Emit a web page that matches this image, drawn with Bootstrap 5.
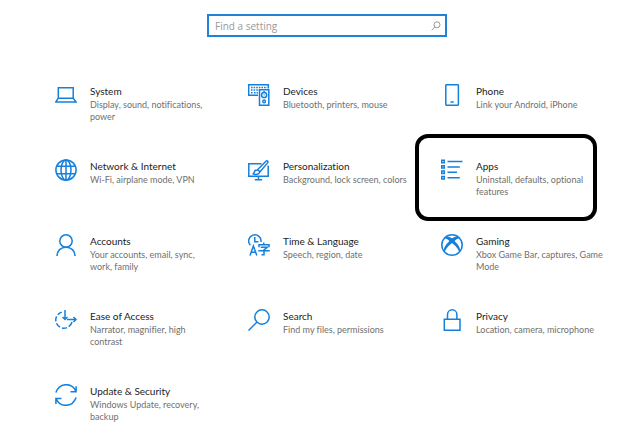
<!DOCTYPE html>
<html lang="en">
<head>
<meta charset="utf-8">
<meta name="viewport" content="width=device-width, initial-scale=1">
<title>Settings</title>
<link href="https://cdn.jsdelivr.net/npm/bootstrap@5.3.0/dist/css/bootstrap.min.css" rel="stylesheet">
<style>
body { background: #fff; font-family: Lato, "Open Sans", sans-serif; font-variant-ligatures: none; }
.settings-page { padding: 14px 20px 0 55px; }
.find-box { max-width: 240px; height: 23px; border: 2px solid #1f83d8; margin-bottom: 46px; }
.find-box input { font-family: "Open Sans", sans-serif; font-size: 10px; line-height: 12px; padding: 0 0 0 6px; color: #333; }
.find-box input::placeholder { color: #999; opacity: 1; }
.find-box input:focus { box-shadow: none; }
.find-box .btn { width: 14px; color: #999; }
.settings-grid { --bs-gutter-x: 35px; --bs-gutter-y: 33px; }
.setting { min-height: 42px; gap: 13px; color: #1c1c1c; }
.setting svg { width: 22px; height: 22px; margin-top: 1px; fill: none; stroke: #1480db; stroke-width: 1.5; }
.setting svg .solid { fill: #1480db; stroke: none; }
.setting h2 { font-size: 10px; line-height: 16px; font-weight: 400; }
.setting p { font-size: 9px; line-height: 12px; color: #707070; }
.highlight { top: -24px; left: -9px; right: 20px; height: 87px; border: 4px solid #000; border-radius: 13px; pointer-events: none; }
</style>
<script src="https://cdn.jsdelivr.net/npm/bootstrap@5.3.0/dist/js/bootstrap.bundle.min.js" defer></script>
</head>
<body>
<main class="settings-page">
  <form class="find-box d-flex mx-auto" role="search">
    <input class="form-control border-0 rounded-0 bg-transparent" type="text" placeholder="Find a setting" aria-label="Find a setting">
    <button class="btn border-0 p-0 d-flex align-items-center flex-shrink-0" type="button" aria-label="Search">
      <svg width="10" height="10" viewBox="0 0 10 10" fill="none" stroke="currentColor"><circle cx="6" cy="3.8" r="3"/><path d="M3.8 6 .7 9.3"/></svg>
    </button>
  </form>
  <div class="row row-cols-3 settings-grid">
    <div class="col"><a href="#" class="setting d-flex align-items-start text-decoration-none">
      <svg class="flex-shrink-0" viewBox="0 0 22 22"><path d="M3.3 3.8h14.9v10.4H3.3zM3.3 14.2.8 18h20.3l-2.900-3.800"/></svg>
      <div><h2 class="m-0">System</h2><p class="m-0">Display, sound, notifications, power</p></div></a></div>
    <div class="col"><a href="#" class="setting d-flex align-items-start text-decoration-none">
      <svg class="flex-shrink-0" viewBox="0 0 22 22"><path d="M10 11.3H.7V.8h19.6v3.7"/><path d="M3 3.500h16M3 6h8M3 8.700h1.500M6 8.700h4" stroke-dasharray="1.6 1"/><path d="M11.500 5.700h9.300v15.500h-9.300z"/><circle cx="16.1" cy="11" r="2.6"/><circle cx="16.1" cy="17.4" r="1.3"/><path class="solid" d="M15.400 7.100h1.500v1.200h-1.500zM15.500 10.400h1.200v1.200h-1.200z"/></svg>
      <div><h2 class="m-0">Devices</h2><p class="m-0">Bluetooth, printers, mouse</p></div></a></div>
    <div class="col"><a href="#" class="setting d-flex align-items-start text-decoration-none">
      <svg class="flex-shrink-0" viewBox="0 0 22 22"><rect x="4.8" y=".8" width="12.6" height="20.4" rx=".6"/><path d="M9.500 18h3.200"/></svg>
      <div><h2 class="m-0">Phone</h2><p class="m-0">Link your Android, iPhone</p></div></a></div>

    <div class="col"><a href="#" class="setting d-flex align-items-start text-decoration-none">
      <svg class="flex-shrink-0" viewBox="0 0 22 22"><circle cx="11" cy="11" r="10.1"/><ellipse cx="11" cy="11" rx="5" ry="10.1"/><path d="M11 1v20M2 7.200h18M2 14.800h18"/></svg>
      <div><h2 class="m-0">Network &amp; Internet</h2><p class="m-0">Wi-Fi, airplane mode, VPN</p></div></a></div>
    <div class="col"><a href="#" class="setting d-flex align-items-start text-decoration-none">
      <svg class="flex-shrink-0" viewBox="0 0 22 22"><path d="M13.500 4.800H.8v12.500h19.400V6.500M10.500 17.300v3.500M6.800 20.800h7.400"/><path d="m9.300 11 8.600-8.800c1.200-1.100 2.700.4 1.700 1.700l-8 9.400M9.300 11c-2.300-.1-3 1.400-3.100 2.700-.1.800-.8 1.100-1.600 1.200 3.300 1.100 6.800.6 7-1.600.1-1.100-.9-2.200-2.300-2.300z"/></svg>
      <div><h2 class="m-0">Personalization</h2><p class="m-0 text-nowrap">Background, lock screen, colors</p></div></a></div>
    <div class="col position-relative"><a href="#" class="setting d-flex align-items-start text-decoration-none">
      <svg class="flex-shrink-0" viewBox="0 0 22 22"><path d="M.7 1.300h2.600v2.400H.7zM.7 6.700h2.600v2.400H.7zM.7 12.100h2.600v2.400H.7zM.7 17.500h2.600v2.400H.7z"/><path d="M6.500 2.500h15M6.500 7.900h12.300M6.500 13.300H16M6.500 18.700h12.300"/></svg>
      <div><h2 class="m-0">Apps</h2><p class="m-0">Uninstall, defaults, optional features</p></div></a>
      <div class="highlight position-absolute"></div></div>

    <div class="col"><a href="#" class="setting d-flex align-items-start text-decoration-none">
      <svg class="flex-shrink-0" viewBox="0 0 22 22"><circle cx="11" cy="7" r="6.2"/><path d="M2 22c0-5.200 3.800-8.800 9-8.800s9 3.600 9 8.800"/></svg>
      <div><h2 class="m-0">Accounts</h2><p class="m-0">Your accounts, email, sync, work, family</p></div></a></div>
    <div class="col"><a href="#" class="setting d-flex align-items-start text-decoration-none">
      <svg class="flex-shrink-0" viewBox="0 0 22 22"><path d="M2.400 11.300A6.200 6.200 0 1 1 13 8M6.800 3v4.700h3.600"/><path d="m2 21.500 3.400-9.500 3.400 9.500M3.200 18.300h4.500"/><path d="M15.700 8.600v2M11 13.300v-2.500h10v2.500M12.700 13.300h6.500l-3.200 2.500v4.900h-2.500M10.300 16.700h11.500"/></svg>
      <div><h2 class="m-0">Time &amp; Language</h2><p class="m-0">Speech, region, date</p></div></a></div>
    <div class="col"><a href="#" class="setting d-flex align-items-start text-decoration-none">
      <svg class="flex-shrink-0" viewBox="0 0 22 22"><circle cx="11" cy="11" r="10.2"/><path class="solid" d="M5 3.100C7 2.200 9 3 11 4.200 13 3 15 2.200 17 3.100l1.500 1.400c-1.800-.3-3.400.9-4.900 2.500 3 3 5.800 6.500 5.600 10l-1 1.200C17.500 14.800 14 11.300 11 9c-3 2.300-6.500 5.800-7.200 9.200l-1-1.200c-.2-3.500 2.600-7 5.600-10C6.900 5.400 5.300 4.200 3.500 4.500z"/></svg>
      <div><h2 class="m-0">Gaming</h2><p class="m-0 text-nowrap">Xbox Game Bar, captures, Game<br>Mode</p></div></a></div>

    <div class="col"><a href="#" class="setting d-flex align-items-start text-decoration-none">
      <svg class="flex-shrink-0" viewBox="0 0 22 22"><path d="M6.800 3.100A8.200 8.200 0 0 0 2.700 5.700M1.600 7.300A8.200 8.200 0 0 0 .9 12.300M1.500 14.300A8.200 8.200 0 0 0 5 18.200M7 19a8.200 8.200 0 0 0 5-.4M13.700 17.700A8.200 8.200 0 0 0 17 13"/><path d="M10 1v9.500M7.500 8 10 10.500 12.500 8M12 10.500h9M18.500 8l2.500 2.500-2.500 2.500"/></svg>
      <div><h2 class="m-0">Ease of Access</h2><p class="m-0">Narrator, magnifier, high contrast</p></div></a></div>
    <div class="col"><a href="#" class="setting d-flex align-items-start text-decoration-none">
      <svg class="flex-shrink-0" viewBox="0 0 22 22"><circle cx="14" cy="8" r="7.2"/><path d="M8.800 13.200.5 21.500"/></svg>
      <div><h2 class="m-0">Search</h2><p class="m-0">Find my files, permissions</p></div></a></div>
    <div class="col"><a href="#" class="setting d-flex align-items-start text-decoration-none">
      <svg class="flex-shrink-0" viewBox="0 0 22 22"><path d="M3.300 10.200h15.700v11H3.300zM6.500 10.200V5.500a4.700 4.700 0 0 1 9.400 0v4.700"/></svg>
      <div><h2 class="m-0">Privacy</h2><p class="m-0">Location, camera, microphone</p></div></a></div>

    <div class="col"><a href="#" class="setting d-flex align-items-start text-decoration-none">
      <svg class="flex-shrink-0" viewBox="0 0 22 22"><path d="M.9 8.500C4.500-1.500 17-2 21 7.500M21.100 2.300v5.500h-5.600M21.100 13.500C17.500 23.500 5 24 1 14.500M.9 20v-5.500h5.600"/></svg>
      <div><h2 class="m-0">Update &amp; Security</h2><p class="m-0">Windows Update, recovery, backup</p></div></a></div>
  </div>
</main>
</body>
</html>
